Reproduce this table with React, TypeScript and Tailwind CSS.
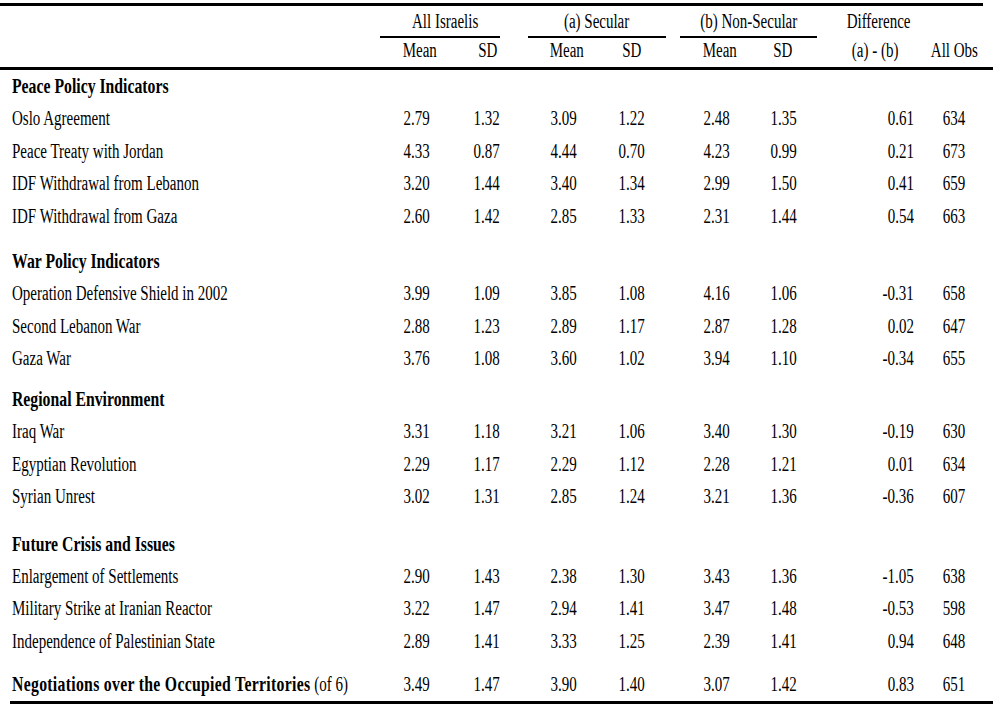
import clsx from "clsx";

type Row = { label: string; v: string[] };
type Section = { title: string; gap: string; rows: Row[] };

const SECTIONS: Section[] = [
  {
    title: "Peace Policy Indicators",
    gap: "mt-0",
    rows: [
      { label: "Oslo Agreement", v: ["2.79", "1.32", "3.09", "1.22", "2.48", "1.35", "0.61", "634"] },
      { label: "Peace Treaty with Jordan", v: ["4.33", "0.87", "4.44", "0.70", "4.23", "0.99", "0.21", "673"] },
      { label: "IDF Withdrawal from Lebanon", v: ["3.20", "1.44", "3.40", "1.34", "2.99", "1.50", "0.41", "659"] },
      { label: "IDF Withdrawal from Gaza", v: ["2.60", "1.42", "2.85", "1.33", "2.31", "1.44", "0.54", "663"] },
    ],
  },
  {
    title: "War Policy Indicators",
    gap: "mt-[13px]",
    rows: [
      { label: "Operation Defensive Shield in 2002", v: ["3.99", "1.09", "3.85", "1.08", "4.16", "1.06", "-0.31", "658"] },
      { label: "Second Lebanon War", v: ["2.88", "1.23", "2.89", "1.17", "2.87", "1.28", "0.02", "647"] },
      { label: "Gaza War", v: ["3.76", "1.08", "3.60", "1.02", "3.94", "1.10", "-0.34", "655"] },
    ],
  },
  {
    title: "Regional Environment",
    gap: "mt-[8.5px]",
    rows: [
      { label: "Iraq War", v: ["3.31", "1.18", "3.21", "1.06", "3.40", "1.30", "-0.19", "630"] },
      { label: "Egyptian Revolution", v: ["2.29", "1.17", "2.29", "1.12", "2.28", "1.21", "0.01", "634"] },
      { label: "Syrian Unrest", v: ["3.02", "1.31", "2.85", "1.24", "3.21", "1.36", "-0.36", "607"] },
    ],
  },
  {
    title: "Future Crisis and Issues",
    gap: "mt-[15px]",
    rows: [
      { label: "Enlargement of Settlements", v: ["2.90", "1.43", "2.38", "1.30", "3.43", "1.36", "-1.05", "638"] },
      { label: "Military Strike at Iranian Reactor", v: ["3.22", "1.47", "2.94", "1.41", "3.47", "1.48", "-0.53", "598"] },
      { label: "Independence of Palestinian State", v: ["2.89", "1.41", "3.33", "1.25", "2.39", "1.41", "0.94", "648"] },
    ],
  },
];

const TOTAL = ["3.49", "1.47", "3.90", "1.40", "3.07", "1.42", "0.83", "651"];

// left margins of the six mean/sd cells (60px each, first one starts at 386)
const NUM_GAPS = ["ml-0", "ml-[10px]", "ml-[17px]", "ml-[8px]", "ml-[25px]", "ml-[7px]"];
const HEAD_GAPS = ["ml-[4px]", "ml-[8px]", "ml-[19px]", "ml-[5px]", "ml-[28px]", "ml-[3px]"];

// the source table is set in a horizontally squeezed Times
function T({ children, origin = "origin-center" }: { children: React.ReactNode; origin?: string }) {
  return <span className={clsx("inline-block scale-x-[0.75] whitespace-nowrap", origin)}>{children}</span>;
}

function Values({ v }: { v: string[] }) {
  return (
    <>
      {v.slice(0, 6).map((x, i) => (
        <div key={i} className={clsx("w-[60px] shrink-0 text-center", NUM_GAPS[i])}>
          <T>{x}</T>
        </div>
      ))}
      <div className="w-[101px] shrink-0 text-right">
        <T origin="origin-right">{v[6]}</T>
      </div>
      <div className="ml-[10px] w-[60px] shrink-0 text-center">
        <T>{v[7]}</T>
      </div>
    </>
  );
}

function DataRow({ row }: { row: Row }) {
  return (
    <div className="flex h-[32.4px] leading-[32.4px]">
      <div className="w-[386px] shrink-0 pl-[12px]">
        <T origin="origin-left">{row.label}</T>
      </div>
      <Values v={row.v} />
    </div>
  );
}

export default function App() {
  return (
    <div className="h-[707px] w-[1003px] overflow-hidden bg-white pt-[3px] text-[20px] text-black [font-family:'Liberation_Serif','Times_New_Roman',serif]">
      <div className="h-[3px] w-[983px] bg-black" />

      {/* column groups */}
      <div className="flex h-[32px] leading-[31px]">
        <div className="ml-[380px] h-full w-[120px] shrink-0 border-b-2 border-black pl-[10px] text-center">
          <T>All Israelis</T>
        </div>
        <div className="ml-[28px] h-full w-[138px] shrink-0 border-b-2 border-black text-center">
          <T>(a) Secular</T>
        </div>
        <div className="ml-[14px] h-full w-[137px] shrink-0 border-b-2 border-black text-center">
          <T>(b) Non-Secular</T>
        </div>
        <div className="ml-[19px] w-[80px] shrink-0 text-center">
          <T>Difference</T>
        </div>
      </div>

      <div className="flex h-[29px] leading-[25px]">
        <div className="w-[386px] shrink-0" />
        {["Mean", "SD", "Mean", "SD", "Mean", "SD"].map((h, i) => (
          <div key={i} className={clsx("w-[60px] shrink-0 text-center", HEAD_GAPS[i])}>
            <T>{h}</T>
          </div>
        ))}
        <div className="ml-[31px] w-[60px] shrink-0 text-center">
          <T>(a) - (b)</T>
        </div>
        <div className="ml-[19px] w-[60px] shrink-0 text-center">
          <T>All Obs</T>
        </div>
      </div>

      <div className="h-[3px] w-[993px] bg-black" />

      {SECTIONS.map((s) => (
        <div key={s.title} className={s.gap}>
          <div className="h-[32.4px] pl-[12px] text-[21px] leading-[32.4px] font-bold">
            <T origin="origin-left">{s.title}</T>
          </div>
          {s.rows.map((r) => (
            <DataRow key={r.label} row={r} />
          ))}
        </div>
      ))}

      <div className="mt-[11px] flex h-[32.4px] leading-[32.4px]">
        <div className="w-[386px] shrink-0 pl-[12px]">
          <T origin="origin-left">
            <span className="text-[21px] font-bold tracking-[0.4px]">Negotiations over the Occupied Territories</span> (of 6)
          </T>
        </div>
        <Values v={TOTAL} />
      </div>

      <div className="ml-[10px] h-[3px] w-[983px] bg-black" />
    </div>
  );
}
